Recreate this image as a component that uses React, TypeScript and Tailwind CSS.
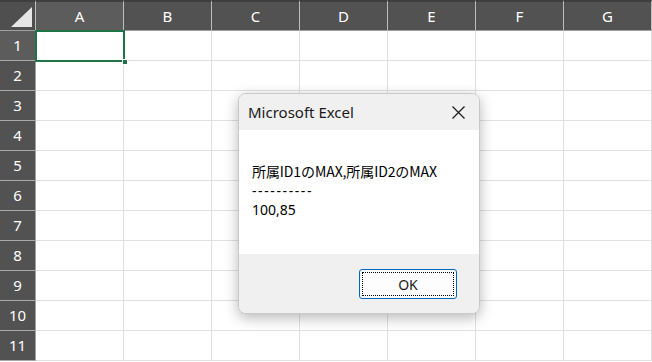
const columns = ['A', 'B', 'C', 'D', 'E', 'F', 'G'];
const rows = [1, 2, 3, 4, 5, 6, 7, 8, 9, 10, 11];

// メッセージボックス
function MessageBox() {
  return (
    <div className="absolute left-[238px] top-[93px] w-[242px] h-[221px] rounded-[8px] border border-[#c9c9c9] bg-white overflow-hidden shadow-[0_4px_14px_rgba(0,0,0,0.28)] flex flex-col">
      <div className="h-[36px] bg-[#f0f0f0] flex items-center justify-between pl-[9px] pr-[14px]">
        <span className="text-[15px] text-[#1a1a1a]">Microsoft Excel</span>
        <svg width="13" height="13" viewBox="0 0 13 13" className="mt-[1px]">
          <path d="M0.5 0.5 L12.5 12.5 M12.5 0.5 L0.5 12.5" stroke="#1a1a1a" strokeWidth="1.2" />
        </svg>
      </div>
      <div className="h-[124px] bg-white pt-[32px] pl-[13px] text-[14px] leading-[19px] text-black font-['Noto_Sans','Noto_Sans_CJK_JP',sans-serif]">
        <div className="font-['Noto_Sans_CJK_JP',sans-serif] tracking-[-0.1px]">所属ID1のMAX,所属ID2のMAX</div>
        <div className="tracking-[1.6px]">----------</div>
        <div>100,85</div>
      </div>
      <div className="flex-1 bg-[#f0f0f0] flex justify-end items-start pt-[15px] pr-[22px]">
        <button className="w-[98px] h-[30px] rounded-[3px] border border-[#0067c0] bg-[#fdfdfd] p-[2px]">
          <div className="w-full h-full border border-dotted border-black flex items-center justify-center text-[14px] text-[#1a1a1a]">
            OK
          </div>
        </button>
      </div>
    </div>
  );
}

export default function App() {
  return (
    <div className="relative w-[652px] h-[362px] overflow-hidden bg-white font-['Noto_Sans',sans-serif]">
      <div className="grid grid-cols-[36px_repeat(7,88px)] grid-rows-[31px_repeat(11,30px)]">
        {/* 左上コーナー */}
        <div className="relative bg-[#4f4f4f] border-t-2 border-t-[#3e3e3e] border-b border-b-[#a0a0a0] border-r border-r-[#bdbdbd]">
          <svg width="24" height="21" className="absolute left-[10px] top-[5px]">
            <polygon points="22,0 22,20 1,20" fill="#e6e6e6" />
          </svg>
        </div>
        {columns.map((c, i) => (
          <div
            key={c}
            className={`flex items-center justify-center text-[15px] text-white border-t-2 border-t-[#3e3e3e] border-b border-b-[#a0a0a0] border-r border-r-[#bdbdbd] ${
              i === 0 ? 'bg-[#5c5c5c]' : 'bg-[#525252]'
            }`}
          >
            {c}
          </div>
        ))}
        {rows.map((r) => (
          <>
            <div
              key={`h${r}`}
              className={`flex items-center justify-center text-[15px] text-white border-b border-b-[#a8a8a8] border-r border-r-[#a0a0a0] ${
                r === 1 ? 'bg-[#5c5c5c]' : 'bg-[#525252]'
              }`}
            >
              {r}
            </div>
            {columns.map((c) => (
              <div key={`${c}${r}`} className="border-b border-r border-[#e1e1e1]" />
            ))}
          </>
        ))}
      </div>

      {/* 選択セル */}
      <div className="absolute left-[35px] top-[30px] w-[90px] h-[32px] border-2 border-[#217346]" />
      <div className="absolute left-[122px] top-[59px] w-[6px] h-[6px] bg-[#217346] border border-white" />

      <MessageBox />
    </div>
  );
}
